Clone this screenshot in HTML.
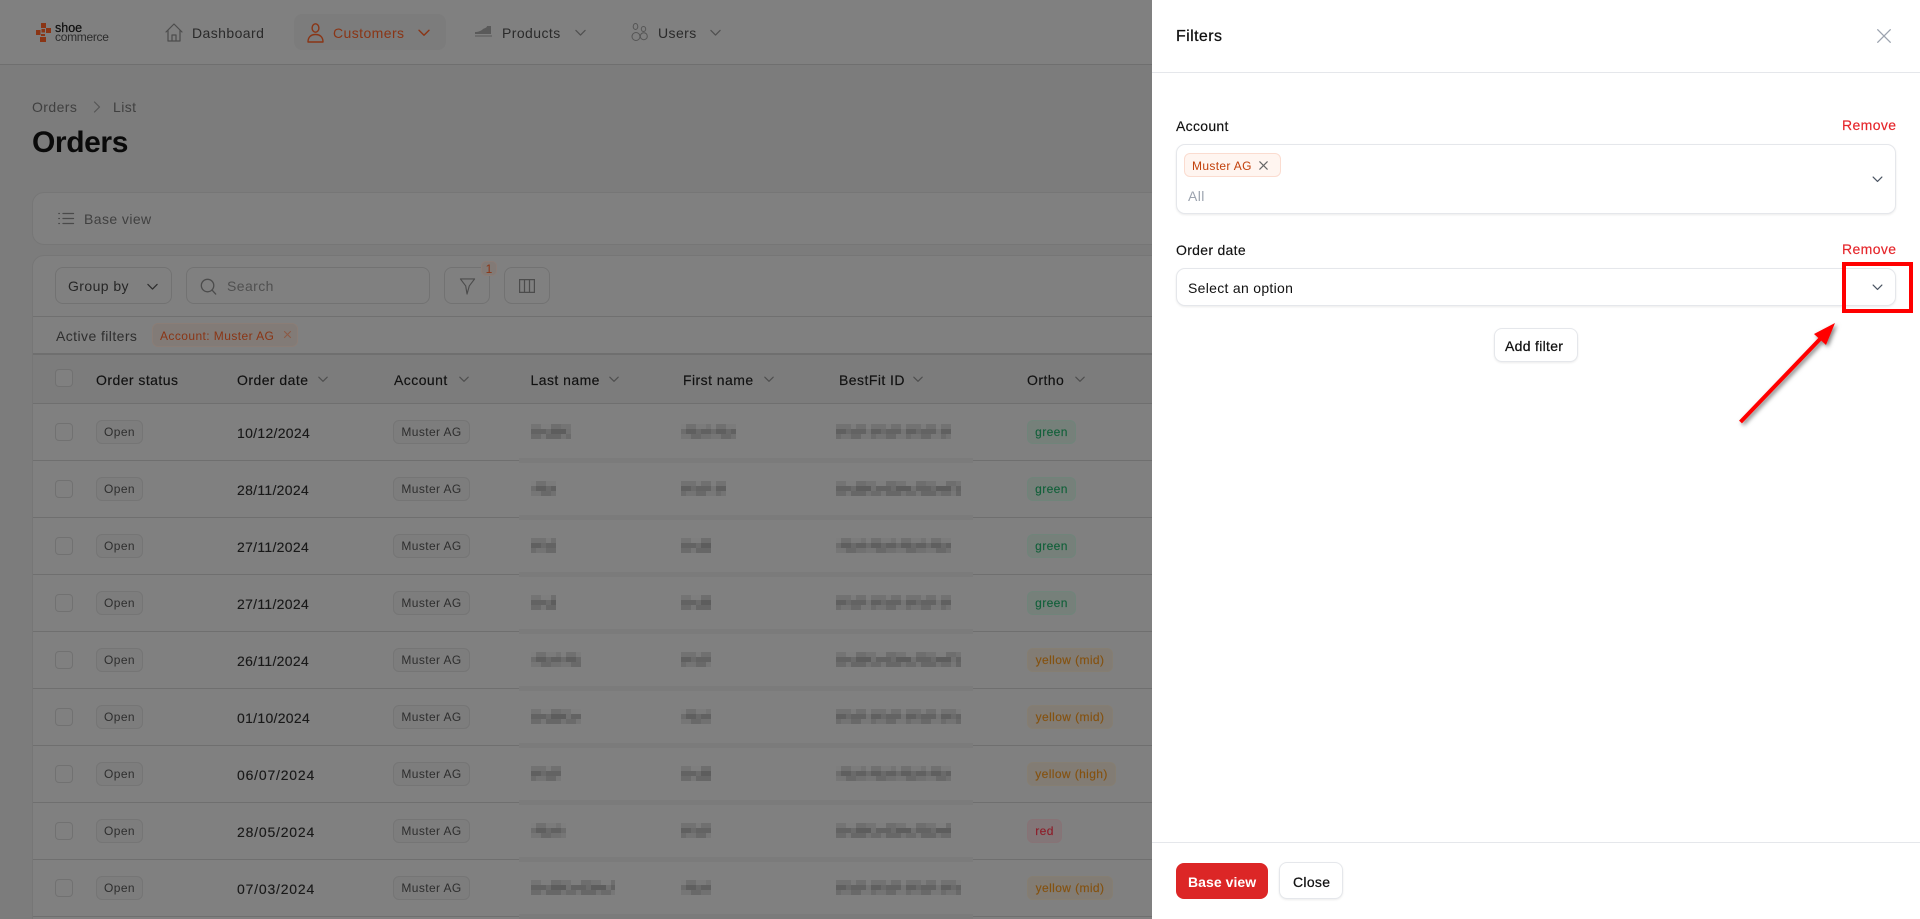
<!DOCTYPE html>
<html><head><meta charset="utf-8"><title>Orders</title>
<style>
*{box-sizing:border-box}
html,body{margin:0;padding:0;width:1920px;height:919px;overflow:hidden;background:#7c7c7c;font-family:"Liberation Sans",sans-serif;font-size:14px;color:#1a1a1a}
#w{position:relative;width:1920px;height:919px;overflow:hidden}
.a{position:absolute}
.t{position:absolute;white-space:nowrap;line-height:20px;letter-spacing:.42px}
.card{position:absolute;left:32px;width:1200px;background:#808080;border:1px solid #767676;border-radius:12px}
.btn{position:absolute;border:1px solid #727272;border-radius:8px;background:#808080}
svg{position:absolute;overflow:visible}
.s{fill:none;stroke:currentColor;stroke-width:1.4;stroke-linecap:round;stroke-linejoin:round}
.r{position:absolute;left:33px;width:1119px;height:57px;border-bottom:1px solid #6f6f6f}
.band{position:absolute;left:486px;width:454px;bottom:-3px;height:5px;background:#7b7b7b}
.cb{position:absolute;left:22px;top:19px;width:18px;height:18px;border:1px solid #717171;border-radius:4px;background:#808080}
.bd{position:absolute;top:16px;height:24px;border:1px solid #757575;border-radius:6px;background:#7d7d7d;font-size:12px;line-height:23.5px;text-align:center;color:#2e2e2e;letter-spacing:.4px;white-space:nowrap;font-weight:400}
.o{left:63px;width:47px}.m{left:360px;width:77px}
.d{position:absolute;left:204px;top:19px;line-height:20px;letter-spacing:.3px;color:#181818;-webkit-text-stroke:.12px #181818}
.w{letter-spacing:.8px}
.g{left:994px;width:49px;background:#76807a;border-color:#70847a;color:#12603a;-webkit-text-stroke:.15px #12603a}
.y{left:994px;width:86px;background:#827c74;border-color:#857e72;color:#855210;-webkit-text-stroke:.15px #855210}
.h{left:994px;width:89px;background:#827c74;border-color:#857e72;color:#855210;-webkit-text-stroke:.15px #855210}
.x{left:994px;width:35px;background:#837678;border-color:#877376;color:#8e1e2a;-webkit-text-stroke:.15px #8e1e2a}
.b{position:absolute;top:20px;height:15px;filter:blur(.25px)}
.l{left:498px}.f{left:648px}.i{left:803px}
.p1{background:repeating-linear-gradient(90deg,#747474 0 10px,#7e7e7e 10px 20px,#6e6e6e 20px 30px) 0 0/100% 5px no-repeat,repeating-linear-gradient(90deg,#636363 0 15px,#6c6c6c 15px 20px,#5d5d5d 20px 35px,#727272 35px 40px) 0 5px/100% 5px no-repeat,repeating-linear-gradient(90deg,#6b6b6b 0 10px,#777 10px 15px,#676767 15px 30px,#747474 30px 35px) 0 10px/100% 5px no-repeat}
.p2{background:repeating-linear-gradient(90deg,#7e7e7e 0 5px,#707070 5px 15px,#7b7b7b 15px 25px,#747474 25px 30px) 0 0/100% 5px no-repeat,repeating-linear-gradient(90deg,#6d6d6d 0 5px,#5f5f5f 5px 15px,#6a6a6a 15px 20px,#616161 20px 30px) 0 5px/100% 5px no-repeat,repeating-linear-gradient(90deg,#767676 0 10px,#696969 10px 20px,#717171 20px 30px) 0 10px/100% 5px no-repeat}
.p3{background:repeating-linear-gradient(90deg,#727272 0 15px,#7c7c7c 15px 20px,#707070 20px 30px,#7e7e7e 30px 35px) 0 0/100% 5px no-repeat,repeating-linear-gradient(90deg,#606060 0 10px,#6b6b6b 10px 15px,#636363 15px 30px,#757575 30px 35px) 0 5px/100% 5px no-repeat,repeating-linear-gradient(90deg,#6c6c6c 0 5px,#747474 5px 15px,#696969 15px 25px,#787878 25px 35px) 0 10px/100% 5px no-repeat}
.th{position:absolute;top:15px;line-height:20px;white-space:nowrap;letter-spacing:.45px;color:#111;-webkit-text-stroke:.15px #111}
.pn{position:absolute;left:1152px;top:0;width:768px;height:919px;background:#fff;color:#111}
.pn .t{color:#111}
.sel{position:absolute;background:#fff;border:1px solid #e5e7eb;border-radius:9px;box-shadow:0 1px 2px rgba(0,0,0,.08)}
.pn .rm{color:#e5252a;-webkit-text-stroke:.15px #e5252a}
</style></head><body><div id="w">
<svg width="0" height="0" style="position:absolute"><defs><symbol id="ch" viewBox="0 0 12 8"><path d="M1 1.2 6 6.2 11 1.2" fill="none" stroke="currentColor" stroke-width="1.4" stroke-linecap="round" stroke-linejoin="round"/></symbol></defs></svg>

<!-- header -->
<div class="a" style="left:0;top:0;width:1152px;height:65px;background:#808080;border-bottom:1px solid #6f6f6f"></div>
<svg style="left:36px;top:23px" width="16" height="19" viewBox="0 0 16 19" fill="#8a3515"><path d="M5 0h5v5H5zM10 5h5v5h-5zM0 7h4.500v5H0zM5.500 6H9v3.500H5.500zM5 11h4v2H5zM4 14h6v5H4z"/></svg>
<div class="t" style="left:55px;top:19px;font-size:12.5px;line-height:18px;color:#0e0e0e;letter-spacing:0;-webkit-text-stroke:.2px #0e0e0e">shoe</div>
<div class="t" style="left:55px;top:28px;font-size:12px;line-height:18px;color:#2c2c2c;letter-spacing:-.3px">commerce</div>
<svg class="s" style="left:165px;top:23px;color:#4c4c4c" width="18" height="19" viewBox="0 0 18 19"><path d="M1 9 9 1l8 8M3 7v11h12V7M7 18v-6h4v6" stroke-width="1.2"/></svg>
<div class="t" style="left:192px;top:23px;color:#2a2a2a">Dashboard</div>
<div class="a" style="left:294px;top:14px;width:152px;height:36px;background:#7c7c7c;border-radius:8px"></div>
<svg class="s" style="left:307px;top:23px;color:#8a3515" width="17" height="20" viewBox="0 0 17 20"><ellipse cx="8.500" cy="5" rx="3.400" ry="4.200"/><path d="M1 19c0-5 3-7.500 7.500-7.500S16 14 16 19z"/></svg>
<div class="t" style="left:333px;top:23px;color:#8a3515">Customers</div>
<svg style="left:418px;top:29px;color:#8a3515" width="12" height="8"><use href="#ch"/></svg>
<svg style="left:475px;top:26px" width="17" height="11" viewBox="0 0 17 11"><path d="M0 6c3 0 6-1 8-3 2-1 4-1.500 4-3h4v8H0z" fill="#5a5a5a"/><path d="M0 9h17v2H0z" fill="#6c6c6c"/></svg>
<div class="t" style="left:502px;top:23px;color:#2a2a2a">Products</div>
<svg style="left:575px;top:29px;color:#505050" width="11" height="8"><use href="#ch"/></svg>
<svg class="s" style="left:631px;top:23px;color:#555" width="17" height="18" viewBox="0 0 17 18"><g stroke-width="1"><ellipse cx="4.500" cy="3.500" rx="2.300" ry="3"/><ellipse cx="12.500" cy="6" rx="2.200" ry="2.500"/><circle cx="5" cy="13.500" r="4"/><circle cx="12.800" cy="13.200" r="3.500"/></g></svg>
<div class="t" style="left:658px;top:23px;color:#2a2a2a">Users</div>
<svg style="left:710px;top:29px;color:#505050" width="11" height="8"><use href="#ch"/></svg>

<!-- title -->
<div class="t" style="left:32px;top:97px;color:#404040">Orders</div>
<svg class="s" style="left:93px;top:101px;color:#555" width="8" height="12" viewBox="0 0 8 12"><path d="M1.500 1 6.500 6 1.500 11" stroke-width="1.200"/></svg>
<div class="t" style="left:113px;top:97px;color:#404040">List</div>
<div class="t" style="left:32px;top:126px;font-size:30px;line-height:34px;font-weight:700;color:#0a0a0a;letter-spacing:-.4px">Orders</div>

<!-- base view card -->
<div class="card" style="top:192px;height:53px"></div>
<svg class="s" style="left:58px;top:212px;color:#4a4a4a" width="16" height="13" viewBox="0 0 16 13"><path d="M5 1.500h10.500M5 6.500h10.500M5 11.500h10.500M.8 1.500h.6M.8 6.500h.6M.8 11.500h.6" stroke-width="1.300"/></svg>
<div class="t" style="left:84px;top:209px;color:#404040">Base view</div>

<!-- table card -->
<div class="card" style="top:255px;height:700px"></div>
<div class="btn" style="left:55px;top:267px;width:117px;height:37px"></div>
<div class="t" style="left:68px;top:276px;color:#262626">Group by</div>
<svg style="left:147px;top:283px;color:#2e2e2e" width="11" height="8"><use href="#ch"/></svg>
<div class="btn" style="left:186px;top:267px;width:244px;height:37px"></div>
<svg class="s" style="left:200px;top:278px;color:#4c4c4c" width="17" height="17" viewBox="0 0 17 18"><circle cx="7.500" cy="8" r="6.600"/><path d="m12.500 13 3.600 4"/></svg>
<div class="t" style="left:227px;top:276px;color:#505050">Search</div>
<div class="btn" style="left:444px;top:267px;width:46px;height:37px"></div>
<svg class="s" style="left:459px;top:278px;color:#4c4c4c" width="17" height="17" viewBox="0 0 17 18"><path d="M1 1h15l-5.600 7.400L8 17 6.600 8.400z" stroke-width="1.200"/></svg>
<div class="a" style="left:481px;top:261px;width:16px;height:15px;background:#827a76;border:1px solid #8a7c76;border-radius:5px;color:#8a3515;font-size:12px;line-height:14px;text-align:center">1</div>
<div class="btn" style="left:504px;top:267px;width:46px;height:37px"></div>
<svg style="left:519px;top:279px;color:#4c4c4c" width="16" height="14" viewBox="0 0 16 14"><path d="M.6.6h14.800v12.800H.6zM5.500.6v12.800M10.500.6v12.800" fill="none" stroke="currentColor" stroke-width="1.200"/></svg>
<div class="a" style="left:33px;top:316px;width:1119px;height:1px;background:#707070"></div>
<div class="t" style="left:56px;top:326px;color:#2e2e2e">Active filters</div>
<div class="a" style="left:152px;top:323px;width:146px;height:24px;background:#827b77;border:1px solid #8a7d76;border-radius:6px"></div>
<div class="t" style="left:160px;top:326px;font-size:12px;color:#8a3515;letter-spacing:.42px">Account: Muster AG</div>
<svg class="s" style="left:284px;top:331px;color:#8c5a46" width="7" height="7" viewBox="0 0 7 7"><path d="m.5.5 6 6M6.500.5l-6 6" stroke-width="1.100"/></svg>
<div class="a" style="left:33px;top:353px;width:1119px;height:2px;background:#6f6f6f"></div>

<!-- table header -->
<div class="r" style="top:355px;height:49px;background:#7c7c7c">
<i class="cb" style="top:14px"></i>
<div class="th" style="left:63px">Order status</div>
<div class="th" style="left:204px">Order date</div><svg style="left:285px;top:21px;color:#4e4e4e" width="10" height="7"><use href="#ch"/></svg>
<div class="th" style="left:361px">Account</div><svg style="left:426px;top:21px;color:#4e4e4e" width="10" height="7"><use href="#ch"/></svg>
<div class="th" style="left:497.500px">Last name</div><svg style="left:576px;top:21px;color:#4e4e4e" width="10" height="7"><use href="#ch"/></svg>
<div class="th" style="left:650px">First name</div><svg style="left:731px;top:21px;color:#4e4e4e" width="10" height="7"><use href="#ch"/></svg>
<div class="th" style="left:806px">BestFit ID</div><svg style="left:880px;top:21px;color:#4e4e4e" width="10" height="7"><use href="#ch"/></svg>
<div class="th" style="left:994px">Ortho</div><svg style="left:1042px;top:21px;color:#4e4e4e" width="10" height="7"><use href="#ch"/></svg>
</div>

<!-- rows -->
<div class="r" style="top:404px"><div class="band"></div><i class="cb"></i><b class="bd o">Open</b><div class="d">10/12/2024</div><b class="bd m">Muster AG</b><i class="b l p1" style="width:40px"></i><i class="b f p2" style="width:55px"></i><i class="b i p3" style="width:115px"></i><b class="bd g">green</b></div>
<div class="r" style="top:461px"><div class="band"></div><i class="cb"></i><b class="bd o">Open</b><div class="d">28/11/2024</div><b class="bd m">Muster AG</b><i class="b l p2" style="width:25px"></i><i class="b f p3" style="width:45px"></i><i class="b i p1" style="width:125px"></i><b class="bd g">green</b></div>
<div class="r" style="top:518px"><div class="band"></div><i class="cb"></i><b class="bd o">Open</b><div class="d">27/11/2024</div><b class="bd m">Muster AG</b><i class="b l p3" style="width:25px"></i><i class="b f p1" style="width:30px"></i><i class="b i p2" style="width:115px"></i><b class="bd g">green</b></div>
<div class="r" style="top:575px"><div class="band"></div><i class="cb"></i><b class="bd o">Open</b><div class="d">27/11/2024</div><b class="bd m">Muster AG</b><i class="b l p1" style="width:25px"></i><i class="b f p1" style="width:30px"></i><i class="b i p3" style="width:115px"></i><b class="bd g">green</b></div>
<div class="r" style="top:632px"><div class="band"></div><i class="cb"></i><b class="bd o">Open</b><div class="d">26/11/2024</div><b class="bd m">Muster AG</b><i class="b l p2" style="width:50px"></i><i class="b f p3" style="width:30px"></i><i class="b i p1" style="width:125px"></i><b class="bd y">yellow (mid)</b></div>
<div class="r" style="top:689px"><div class="band"></div><i class="cb"></i><b class="bd o">Open</b><div class="d">01/10/2024</div><b class="bd m">Muster AG</b><i class="b l p1" style="width:50px"></i><i class="b f p2" style="width:30px"></i><i class="b i p3" style="width:125px"></i><b class="bd y">yellow (mid)</b></div>
<div class="r" style="top:746px"><div class="band"></div><i class="cb"></i><b class="bd o">Open</b><div class="d w">06/07/2024</div><b class="bd m">Muster AG</b><i class="b l p3" style="width:30px"></i><i class="b f p1" style="width:30px"></i><i class="b i p2" style="width:115px"></i><b class="bd h">yellow (high)</b></div>
<div class="r" style="top:803px"><div class="band"></div><i class="cb"></i><b class="bd o">Open</b><div class="d w">28/05/2024</div><b class="bd m">Muster AG</b><i class="b l p2" style="width:35px"></i><i class="b f p3" style="width:30px"></i><i class="b i p1" style="width:115px"></i><b class="bd x">red</b></div>
<div class="r" style="top:860px"><div class="band"></div><i class="cb"></i><b class="bd o">Open</b><div class="d w">07/03/2024</div><b class="bd m">Muster AG</b><i class="b l p1" style="width:84px"></i><i class="b f p2" style="width:30px"></i><i class="b i p3" style="width:125px"></i><b class="bd y">yellow (mid)</b></div>

<!-- panel -->
<div class="pn">
<div class="a" style="left:0;top:72px;width:768px;height:1px;background:#e5e7eb"></div>
<div class="t" style="left:24px;top:27px;font-size:16px;letter-spacing:.4px;-webkit-text-stroke:.25px #111">Filters</div>
<svg class="s" style="left:725px;top:29px;color:#9ca3af" width="14" height="14" viewBox="0 0 14 14"><path d="m.7.7 12.600 12.600M13.300.7.700 13.300" stroke-width="1.300"/></svg>
<div class="t" style="left:24px;top:116px;letter-spacing:.3px;-webkit-text-stroke:.15px #111">Account</div>
<div class="t rm" style="left:690px;top:115px;letter-spacing:.38px">Remove</div>
<div class="sel" style="left:24px;top:144px;width:720px;height:70px"></div>
<div class="a" style="left:32px;top:153px;width:97px;height:24px;background:#fff5f0;border:1px solid #fbdcd0;border-radius:6px"></div>
<div class="t" style="left:40px;top:156px;font-size:12px;letter-spacing:.35px"><span style="color:#c2410c">Muster AG</span></div>
<svg class="s" style="left:107px;top:161px;color:#666" width="9" height="9" viewBox="0 0 9 9"><path d="m.8.8 7.400 7.400M8.200.8.800 8.200" stroke-width="1.200"/></svg>
<div class="t" style="left:36px;top:186px"><span style="color:#9ca3af">All</span></div>
<svg style="left:720px;top:176px;color:#4b5563" width="11" height="7"><use href="#ch"/></svg>
<div class="t" style="left:24px;top:240px;letter-spacing:.3px;-webkit-text-stroke:.15px #111">Order date</div>
<div class="t rm" style="left:690px;top:239px;letter-spacing:.38px">Remove</div>
<div class="sel" style="left:24px;top:268px;width:720px;height:38px"></div>
<div class="t" style="left:36px;top:278px;letter-spacing:.3px">Select an option</div>
<svg style="left:720px;top:284px;color:#4b5563" width="11" height="7"><use href="#ch"/></svg>
<div class="a" style="left:342px;top:328px;width:84px;height:34px;border:1px solid #e5e7eb;border-radius:8px;background:#fff;box-shadow:0 1px 2px rgba(0,0,0,.08)"></div>
<div class="t" style="left:353px;top:336px;-webkit-text-stroke:.25px #111;letter-spacing:.3px">Add filter</div>
<div class="a" style="left:0;top:842px;width:768px;height:1px;background:#e5e7eb"></div>
<div class="a" style="left:24px;top:863px;width:92px;height:36px;background:#dc2626;border-radius:8px"></div>
<div class="t" style="left:36px;top:872px;font-weight:700;letter-spacing:.05px"><span style="color:#fff">Base view</span></div>
<div class="a" style="left:127px;top:862px;width:64px;height:37px;border:1px solid #e5e7eb;border-radius:8px;background:#fff;box-shadow:0 1px 2px rgba(0,0,0,.08)"></div>
<div class="t" style="left:141px;top:872px;-webkit-text-stroke:.25px #111;letter-spacing:.3px">Close</div>
</div>

<!-- annotations -->
<svg style="left:0;top:0" width="1920" height="919">
<defs><filter id="sh" x="-30%" y="-30%" width="160%" height="160%"><feDropShadow dx="2" dy="2" stdDeviation="2" flood-color="#000" flood-opacity=".5"/></filter></defs>
<rect x="1844" y="264" width="67" height="47" fill="none" stroke="#ff0000" stroke-width="4"/>
<g filter="url(#sh)"><path d="M1740.500 422 1822 337" stroke="#ff0000" stroke-width="4" fill="none"/><path d="M1835 323 1826 345 1814 334z" fill="#ff0000"/></g>
</svg>
</div></body></html>
